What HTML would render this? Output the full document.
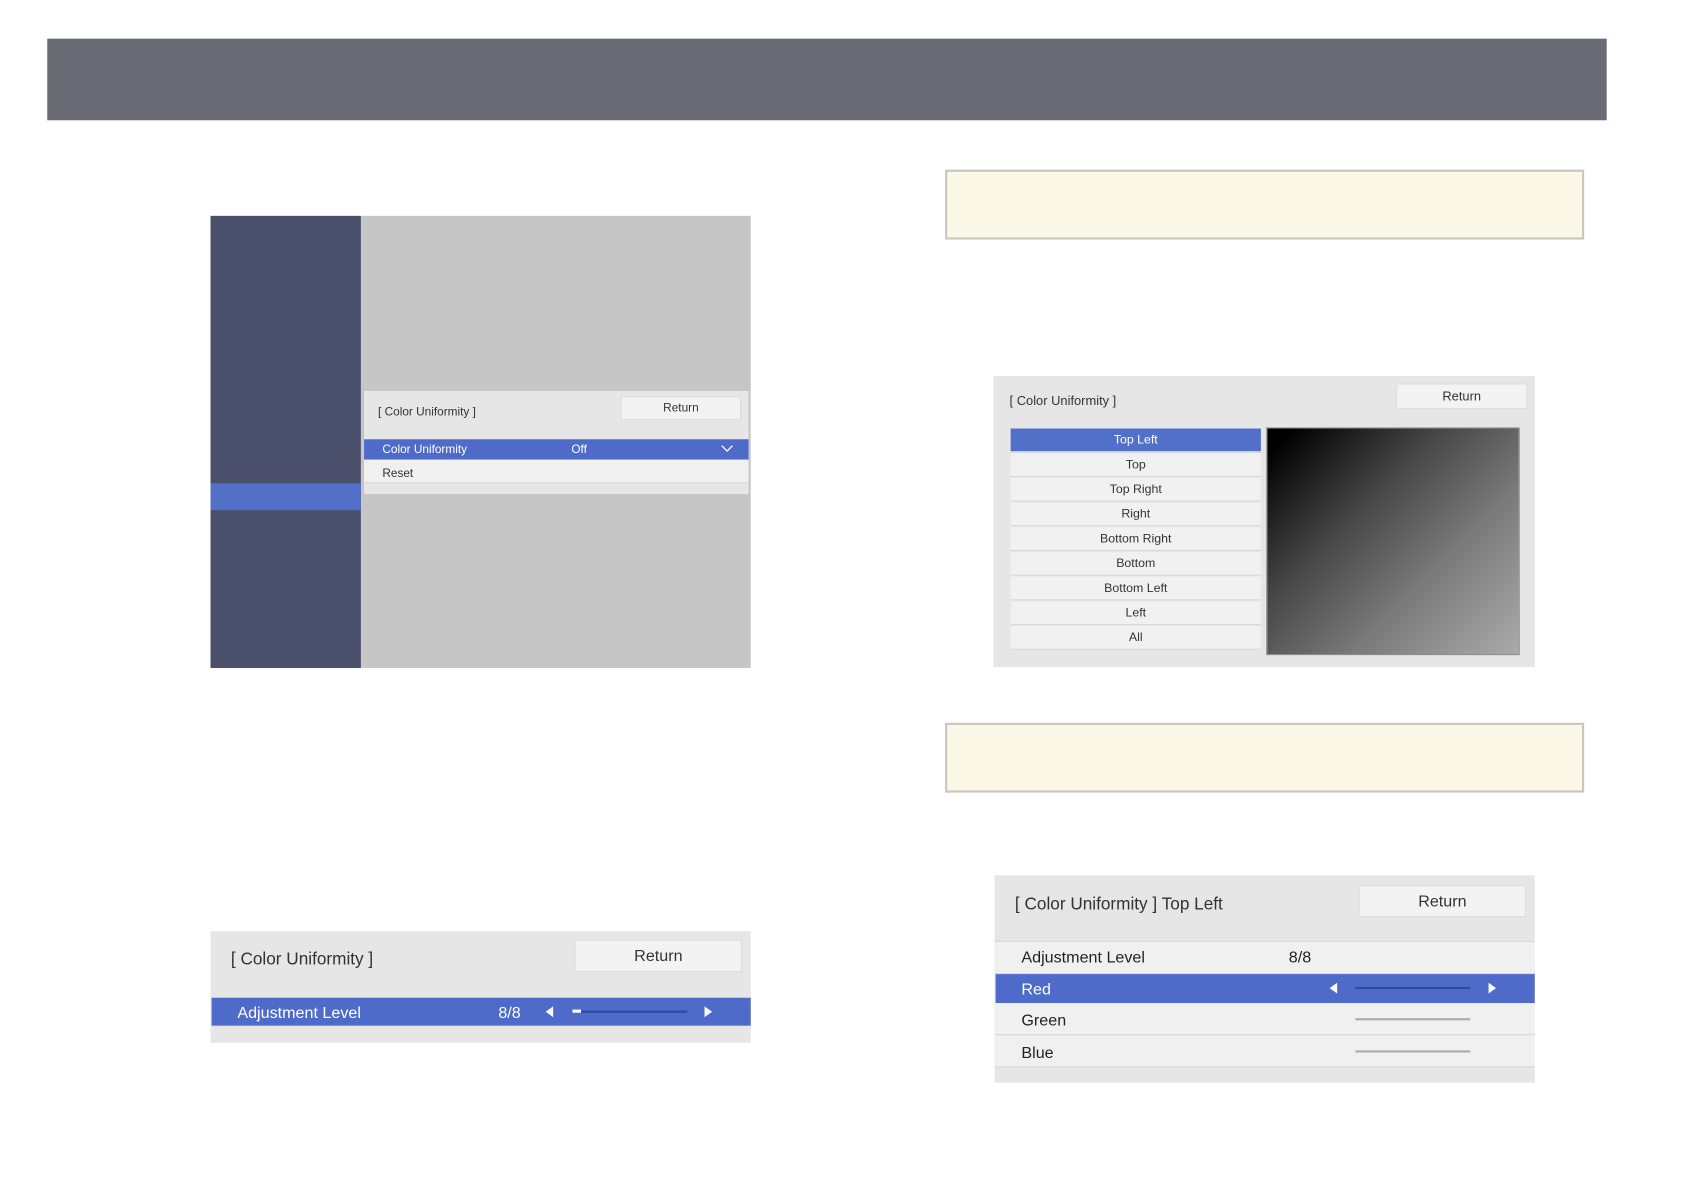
<!DOCTYPE html>
<html><head><meta charset="utf-8"><style>
html,body{margin:0;padding:0;background:#fff;width:1684px;height:1190px;overflow:hidden}
#w{position:absolute;left:0;top:0;width:1545px;height:1092px;transform:scale(1.074);transform-origin:0 0;font-family:"Liberation Sans",sans-serif}
.a{position:absolute;box-sizing:border-box}
.t{position:absolute;white-space:nowrap;line-height:1;margin-top:1.5px}
.btn{position:absolute;background:#f3f3f3;border:1px solid #dcdcdc;box-sizing:border-box;text-align:center;color:#333}
.row{position:absolute;box-sizing:border-box;border-bottom:1px solid #d6d6d6}
.li{position:absolute;left:941px;width:233px;height:22px;background:#f1f1f1;border-bottom:1px solid #d8d8d8;box-sizing:border-box;text-align:center;font-size:11.5px;line-height:22px;color:#333}
.tl{width:0;height:0;border-top:5px solid transparent;border-bottom:5px solid transparent;border-right:7px solid #fff;position:absolute}
.tr{width:0;height:0;border-top:5px solid transparent;border-bottom:5px solid transparent;border-left:7px solid #fff;position:absolute}
</style></head><body><div id="w">
<div class="a" style="left:44px;top:36px;width:1452px;height:76px;background:#686b73"></div>

<div class="a" style="left:196px;top:201px;width:503px;height:421px;background:#c6c6c6"></div>
<div class="a" style="left:196px;top:201px;width:140px;height:421px;background:#4b516d"></div>
<div class="a" style="left:196px;top:450px;width:140px;height:25px;background:#5270c8"></div>
<div class="a" style="left:339px;top:364px;width:358px;height:96px;background:#e6e6e6"></div>
<div class="t" style="left:352px;top:377px;font-size:11px;color:#333">[ Color Uniformity ]</div>
<div class="btn" style="left:578px;top:369px;width:112px;height:22px;font-size:11px;line-height:21px">Return</div>
<div class="a" style="left:339px;top:409px;width:358px;height:19px;background:#4e6bca"></div>
<div class="t" style="left:356px;top:412px;font-size:11px;color:#fff">Color Uniformity</div>
<div class="t" style="left:532px;top:412px;font-size:11px;color:#fff">Off</div>
<svg class="a" style="left:671px;top:413px" width="12" height="10"><path d="M1 2 L6 7 L11 2" stroke="#fff" stroke-width="1.2" fill="none"/></svg>
<div class="row" style="left:339px;top:428px;width:358px;height:22px;background:#f0f0f0"></div>
<div class="t" style="left:356px;top:434px;font-size:11px;color:#333">Reset</div>

<div class="a" style="left:880px;top:158px;width:595px;height:65px;background:#fcf8e8;border:2px solid #c9c6c1"></div>
<div class="a" style="left:880px;top:673px;width:595px;height:65px;background:#fcf8e8;border:2px solid #c9c6c1"></div>

<div class="a" style="left:925px;top:350px;width:504px;height:271px;background:#e6e6e6"></div>
<div class="t" style="left:940px;top:365px;font-size:12px;color:#333">[ Color Uniformity ]</div>
<div class="btn" style="left:1300px;top:357px;width:122px;height:24px;font-size:12px;line-height:23px">Return</div>
<div class="li" style="top:399px;background:#5270c8;color:#fff;border-color:#d8d8d8">Top Left</div>
<div class="li" style="top:422px">Top</div>
<div class="li" style="top:445px">Top Right</div>
<div class="li" style="top:468px">Right</div>
<div class="li" style="top:491px">Bottom Right</div>
<div class="li" style="top:514px">Bottom</div>
<div class="li" style="top:537px">Bottom Left</div>
<div class="li" style="top:560px">Left</div>
<div class="li" style="top:583px">All</div>
<div class="a" style="left:1179px;top:398px;width:236px;height:212px;border:1px solid #888;background:linear-gradient(135deg,#000 5%,#444 35%,#7a7a7a 65%,#aaa 100%)"></div>

<div class="a" style="left:196px;top:867px;width:503px;height:104px;background:#e6e6e6"></div>
<div class="t" style="left:215px;top:884px;font-size:16px;color:#333">[ Color Uniformity ]</div>
<div class="btn" style="left:535px;top:875px;width:156px;height:30px;font-size:15px;line-height:29px">Return</div>
<div class="a" style="left:197px;top:929px;width:502px;height:26px;background:#4e6bca"></div>
<div class="t" style="left:221px;top:934px;font-size:15px;color:#fff">Adjustment Level</div>
<div class="t" style="left:464px;top:934px;font-size:15px;color:#fff">8/8</div>
<div class="tl" style="left:508px;top:937px"></div>
<div class="a" style="left:533px;top:941px;width:107px;height:2px;background:#2f4a9c"></div>
<div class="a" style="left:533px;top:940px;width:8px;height:3px;background:#fff"></div>
<div class="tr" style="left:656px;top:937px"></div>

<div class="a" style="left:926px;top:815px;width:503px;height:193px;background:#e6e6e6"></div>
<div class="t" style="left:945px;top:833px;font-size:16px;color:#333">[ Color Uniformity ] Top Left</div>
<div class="btn" style="left:1265px;top:824px;width:156px;height:30px;font-size:15px;line-height:29px">Return</div>
<div class="row" style="left:926px;top:876px;width:503px;height:31px;background:#f0f0f0;border-top:1px solid #d6d6d6"></div>
<div class="t" style="left:951px;top:882px;font-size:15px;color:#222">Adjustment Level</div>
<div class="t" style="left:1200px;top:882px;font-size:15px;color:#222">8/8</div>
<div class="a" style="left:927px;top:907px;width:502px;height:27px;background:#4e6bca"></div>
<div class="t" style="left:951px;top:912px;font-size:15px;color:#fff">Red</div>
<div class="tl" style="left:1238px;top:915px"></div>
<div class="a" style="left:1262px;top:919px;width:107px;height:2px;background:#2f4a9c"></div>
<div class="tr" style="left:1386px;top:915px"></div>
<div class="row" style="left:926px;top:934px;width:503px;height:30px;background:#f0f0f0"></div>
<div class="t" style="left:951px;top:941px;font-size:15px;color:#222">Green</div>
<div class="a" style="left:1262px;top:948px;width:107px;height:2px;background:#aaa"></div>
<div class="row" style="left:926px;top:964px;width:503px;height:30px;background:#f0f0f0"></div>
<div class="t" style="left:951px;top:971px;font-size:15px;color:#222">Blue</div>
<div class="a" style="left:1262px;top:978px;width:107px;height:2px;background:#aaa"></div>
</div></body></html>
